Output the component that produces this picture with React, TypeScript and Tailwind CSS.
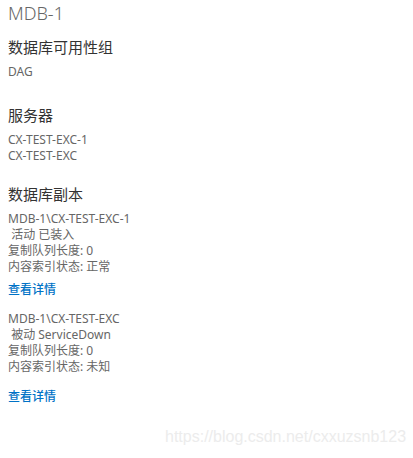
import React from "react";

const font = {
  fontFamily:
    '"Segoe UI", "Noto Sans", "Noto Sans CJK SC", sans-serif',
};

function Replica({ name, status, queue, index }: { name: string; status: string; queue: string; index: string }) {
  return (
    <div className="text-[12px] leading-[16px] text-[#666666]">
      <div>{name}</div>
      <div>&nbsp;{status}</div>
      <div>复制队列长度: {queue}</div>
      <div>内容索引状态: {index}</div>
    </div>
  );
}

export default function App() {
  return (
    <div className="relative w-[413px] h-[458px] bg-white overflow-hidden" style={font}>
      <div className="px-[8px] pt-[3px]">
        <div className="text-[18px] leading-[20px] font-light text-[#666666]">MDB-1</div>
        <div className="mt-[14px] text-[15px] leading-[20px] text-[#333333]">数据库可用性组</div>
        <div className="mt-[7px] text-[12px] leading-[16px] text-[#666666]">DAG</div>
        <div className="mt-[25px] text-[15px] leading-[20px] text-[#333333]">服务器</div>
        <div className="mt-[7px] text-[12px] leading-[16px] text-[#666666]">
          <div>CX-TEST-EXC-1</div>
          <div>CX-TEST-EXC</div>
        </div>
        <div className="mt-[20px] text-[15px] leading-[20px] text-[#333333]">数据库副本</div>
        <div className="mt-[7px]">
          <Replica name="MDB-1\CX-TEST-EXC-1" status="活动 已装入" queue="0" index="正常" />
        </div>
        <div className="mt-[7px] text-[12px] leading-[16px] font-medium text-[#0072c6]">查看详情</div>
        <div className="mt-[13px]">
          <Replica name="MDB-1\CX-TEST-EXC" status="被动 ServiceDown" queue="0" index="未知" />
        </div>
        <div className="mt-[14px] text-[12px] leading-[16px] font-medium text-[#0072c6]">查看详情</div>
      </div>
      <div className="absolute left-[165px] top-[427px] text-[16px] leading-[20px] text-[#ececec]" style={{ fontFamily: '"Liberation Sans", Arial, sans-serif' }}>
        https://blog.csdn.net/cxxuzsnb123
      </div>
    </div>
  );
}
